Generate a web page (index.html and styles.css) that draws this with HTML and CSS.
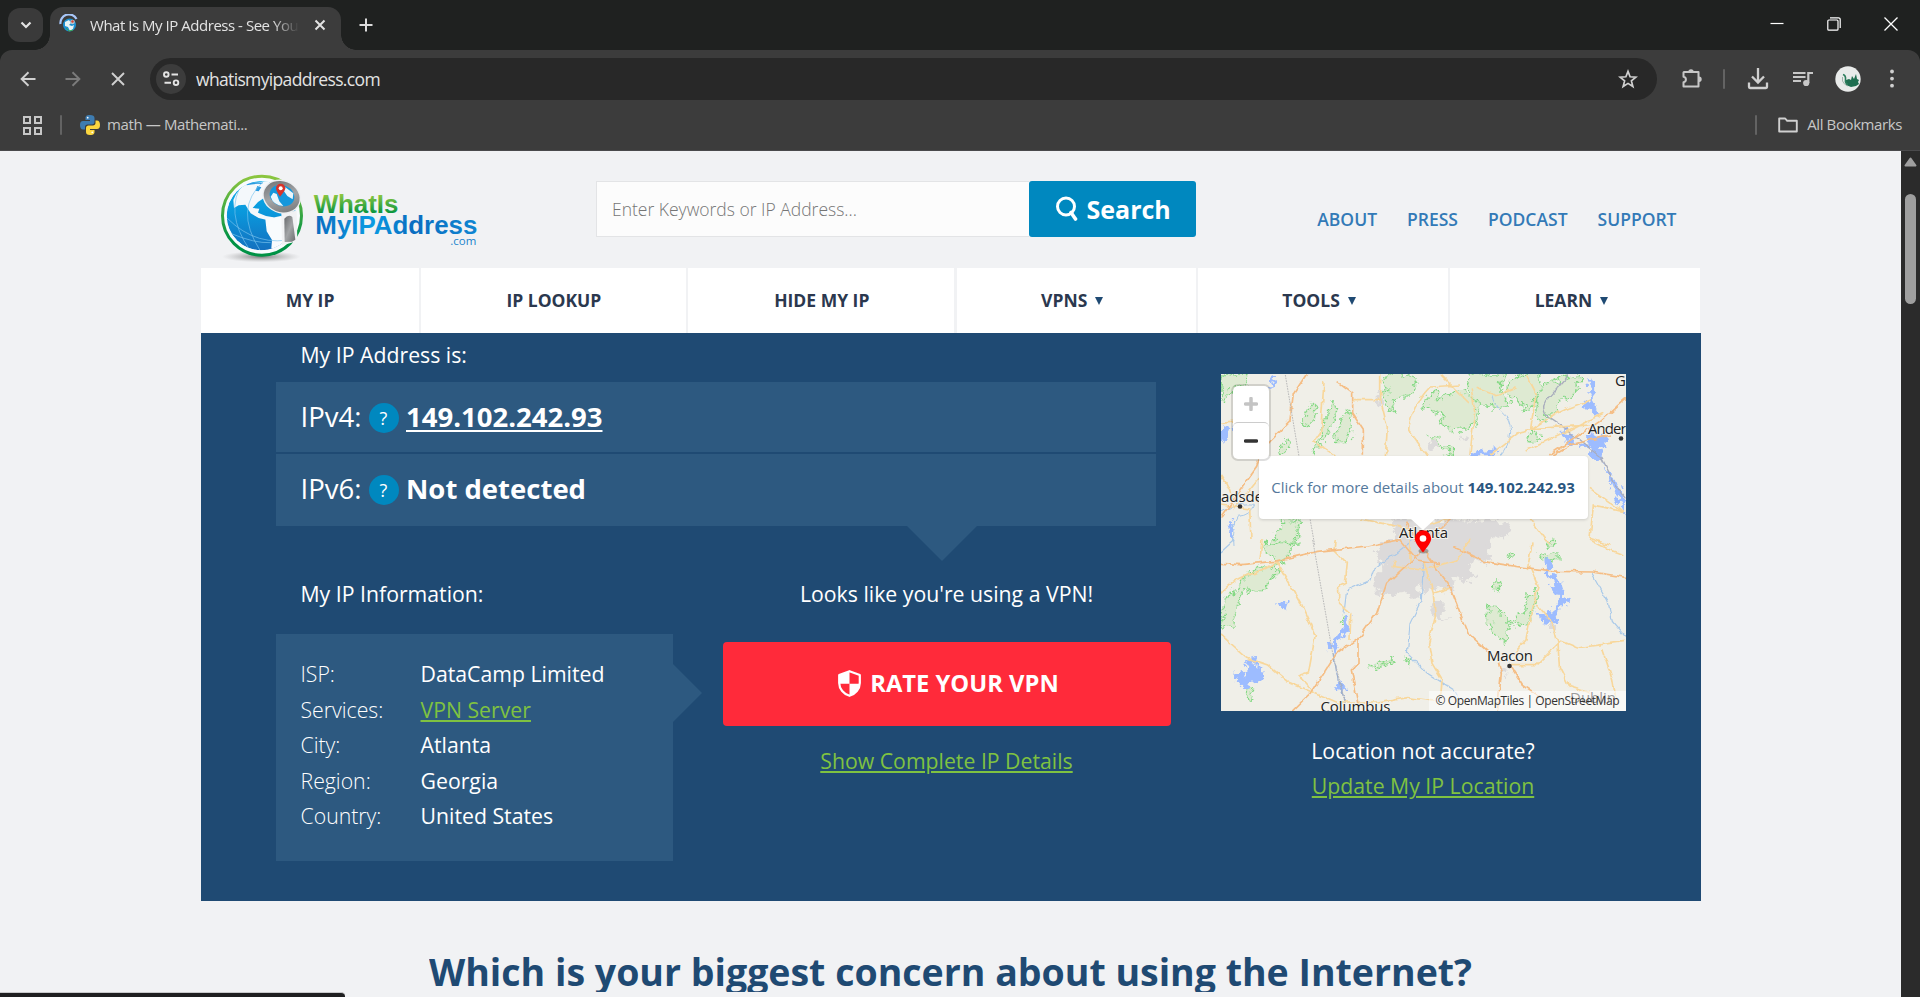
FILE: index.html
```html
<!DOCTYPE html>
<html lang="en">
<head>
<meta charset="utf-8">
<title>What Is My IP Address</title>
<link rel="stylesheet" href="styles.css">
</head>
<body>
<div class="browser">
  <div class="tabstrip">
    <div class="tab-menu"><svg width="14" height="10" viewBox="0 0 14 10"><path d="M2.5 2.5 7 7l4.500-4.500" fill="none" stroke="#e3e3e3" stroke-width="2.200"/></svg></div>
    <div class="tab">
      <svg class="favicon" width="20" height="20" viewBox="0 0 20 20">
        <circle cx="10.500" cy="11" r="6.500" fill="#1c8fd0"/><path d="M6 8l4-2 2 3-2 2 3 1 2-1-1 4-3 2-2-4-3-1z" fill="#e8f3f4"/><circle cx="13.500" cy="8" r="2.300" fill="#b8c6cf"/><circle cx="13.500" cy="7.500" r="1.200" fill="#d8402f"/><path d="M7 14l3 3 4-1" stroke="#3aa655" fill="none"/>
        <path d="M1.500 10A8.500 8.500 0 0 1 17.500 5" fill="none" stroke="#a8c7fa" stroke-width="2.200"/>
      </svg>
      <span class="tab-title">What Is My IP Address - See You</span>
      <svg class="tab-close" width="12" height="12" viewBox="0 0 12 12"><path d="M1.500 1.500l9 9m0-9l-9 9" stroke="#e3e3e3" stroke-width="2"/></svg>
    </div>
    <svg class="tab-new" width="14" height="14" viewBox="0 0 14 14"><path d="M7 .5v13M.5 7h13" stroke="#dcdcdc" stroke-width="2"/></svg>
    <div class="window-buttons">
      <svg width="14" height="14" viewBox="0 0 14 14"><path d="M.5 6.500h13" stroke="#fff" stroke-width="1.200"/></svg>
      <svg width="14" height="14" viewBox="0 0 14 14" fill="none" stroke="#fff" stroke-width="1.200"><rect x=".8" y="3" width="10.200" height="10.200" rx="1"/><path d="M3 .8h8.500a1.700 1.700 0 0 1 1.700 1.700V11"/></svg>
      <svg width="14" height="14" viewBox="0 0 14 14"><path d="M.5.5l13 13m0-13l-13 13" stroke="#fff" stroke-width="1.300"/></svg>
    </div>
  </div>
  <div class="toolbar">
    <svg class="back" width="16" height="16" viewBox="0 0 16 16" fill="none" stroke="#d0d0d0" stroke-width="1.900"><path d="M15.500 8H2M8.500 1.200L1.600 8l6.900 6.800"/></svg>
    <svg class="forward" width="16" height="16" viewBox="0 0 16 16" fill="none" stroke="#7b7b7b" stroke-width="1.900"><path d="M.5 8H14M7.500 1.200L14.400 8l-6.900 6.800"/></svg>
    <svg class="stop" width="14" height="14" viewBox="0 0 14 14"><path d="M1 1l12 12M13 1L1 13" stroke="#d0d0d0" stroke-width="1.900"/></svg>
    <div class="omnibox">
      <div class="site-info"><svg width="17" height="16" viewBox="0 0 17 16" fill="none" stroke="#e3e3e3" stroke-width="1.900"><circle cx="3.300" cy="3.500" r="2.300"/><path d="M8.500 3.500H15M1.500 11.700H8"/><circle cx="13" cy="11.700" r="2.300"/></svg></div>
      <span class="url">whatismyipaddress.com</span>
      <svg class="star" width="20" height="20" viewBox="0 0 20 20"><path d="M10 2.400l2.100 5.400 5.800.4-4.500 3.700 1.500 5.600-4.900-3.100-4.900 3.100 1.500-5.600L2.100 8.200l5.800-.4z" fill="none" stroke="#d0d0d0" stroke-width="1.700"/></svg>
    </div>
    <div class="tools">
      <svg class="ext" width="22" height="22" viewBox="0 0 22 22"><path d="M3 4h14.500v14.500H2.500v-4.300c3.200-.5 3.200-5 0-5.500V4.500z" fill="none" stroke="#c7c7c7" stroke-width="2" stroke-linejoin="round"/><path d="M7.300 4a2.700 2.700 0 0 1 5.400 0zM18 8.500a2.700 2.700 0 0 1 0 5.400z" fill="#c7c7c7"/></svg>
      <i class="sep"></i>
      <svg class="dl" width="22" height="22" viewBox="0 0 22 22" fill="none" stroke="#d0d0d0" stroke-width="2.300"><path d="M11 0v14M5 8.500l6 6 6-6M2 14.500v4.500a1 1 0 0 0 1 1h16a1 1 0 0 0 1-1v-4.500"/></svg>
      <svg class="media" width="20" height="16" viewBox="0 0 20 16"><path d="M0 2h12.500M0 6h12.500M0 10h8" stroke="#c7c7c7" stroke-width="1.900"/><path d="M15.300 12V2H20" stroke="#c7c7c7" stroke-width="2.200" fill="none"/><circle cx="13.200" cy="12" r="3.100" fill="#c7c7c7"/></svg>
      <svg class="avatar" width="26" height="26" viewBox="0 0 26 26"><circle cx="13" cy="13" r="12.700" fill="#e9ebea"/><path d="M11 14l3-1 2 1 1-4 2 3 2-5 1 5 2 1-1 2 1 2-3 2-5 1-5-2z" fill="#1f6e50"/><path d="M8 8.500q3 1 2.500 5t2.500 5" stroke="#2c7d5c" stroke-width="1.600" fill="none"/><path d="M7.500 11v4q1 3 5 5" stroke="#9fb5ab" fill="none"/></svg>
      <svg class="more" width="4" height="20" viewBox="0 0 4 20" fill="#d0d0d0"><circle cx="2" cy="2.500" r="1.900"/><circle cx="2" cy="9.600" r="1.900"/><circle cx="2" cy="16.700" r="1.900"/></svg>
    </div>
  </div>
  <div class="bookmarks">
    <svg class="apps" width="19" height="19" viewBox="0 0 19 19" fill="none" stroke="#c7c7c7" stroke-width="2"><path d="M1 1h6v6H1zM12 1h6v6h-6zM1 12h6v6H1zM12 12h6v6h-6z"/></svg>
    <i class="sep"></i>
    <svg class="python" width="20" height="20" viewBox="0 0 20 20"><path d="M10 0C6 0 5.500 1.500 5.500 3v2H10v1H3C1 6 0 7.500 0 10s1 4.500 3 4.500h2V12c0-1.500 1-2.500 2.500-2.500h4.500c1.500 0 2.500-1 2.500-2.500V3c0-2-1.500-3-4.500-3z" fill="#3e7cb1"/><path d="M10 20c4 0 4.500-1.500 4.500-3v-2H10v-1h7c2 0 3-1.500 3-4s-1-4.500-3-4.500h-1.500V8c0 1.500-1 2.500-2.500 2.500H8.500C7 10.500 6 11.500 6 13v4c0 2 1 3 4 3z" fill="#fbd63f"/><circle cx="7.700" cy="2.700" r=".9" fill="#fff"/><circle cx="12.300" cy="17.300" r=".9" fill="#fff"/></svg>
    <span class="bm-label">math — Mathemati...</span>
    <i class="sep sep-right"></i>
    <svg class="folder" width="20" height="16" viewBox="0 0 20 16"><path d="M1.200 1.500h6l2 2.300h9.600V14.500H1.200z" fill="none" stroke="#d0d0d0" stroke-width="1.900" stroke-linejoin="round"/></svg>
    <span class="bm-all">All Bookmarks</span>
  </div>
  <div class="viewport">
    <div class="page">
      <div class="container">
        <header class="site-header">
          <svg class="logo" width="266" height="95" viewBox="60 60 798 285">
            <defs>
              <linearGradient id="ring" x1="0" y1="0" x2="0" y2="1"><stop offset="0" stop-color="#8cc63f"/><stop offset=".8" stop-color="#009245"/></linearGradient>
              <linearGradient id="sea" x1="0" y1="0" x2="0" y2="1"><stop offset="0" stop-color="#0db0ea"/><stop offset=".45" stop-color="#0a98dc"/><stop offset="1" stop-color="#1470bf"/></linearGradient>
              <linearGradient id="word1" x1="0" y1="0" x2="0" y2="1"><stop offset=".2" stop-color="#8cc63f"/><stop offset=".85" stop-color="#00923f"/></linearGradient>
              <linearGradient id="word2" x1="0" y1="0" x2="1" y2="0"><stop offset="0" stop-color="#0a6dc0"/><stop offset=".35" stop-color="#0a9be2"/><stop offset=".6" stop-color="#0a6dc0"/><stop offset="1" stop-color="#0f86d2"/></linearGradient>
              <linearGradient id="metal" x1="0" y1="0" x2="1" y2="1"><stop offset="0" stop-color="#67696c"/><stop offset=".5" stop-color="#a3a5a7"/><stop offset="1" stop-color="#6c6e70"/></linearGradient>
              <radialGradient id="shade"><stop offset="0" stop-color="#555" stop-opacity=".75"/><stop offset="1" stop-color="#999" stop-opacity="0"/></radialGradient>
              <clipPath id="globe"><circle cx="184" cy="197" r="104"/></clipPath>
            </defs>
            <ellipse cx="184" cy="320" rx="118" ry="17" fill="url(#shade)"/>
            <circle cx="186" cy="197" r="118.500" fill="#f8fbfd" stroke="url(#ring)" stroke-width="9"/>
            <g clip-path="url(#globe)">
              <circle cx="184" cy="197" r="104" fill="url(#sea)"/>
              <path d="M100 150q14-38 46-50l62-8 4 60-20-8-18 12-16 18 20 2-4 12 24 10 22 4 8 12-18-2-34-8-24-14-16-26-20 2-14 8z" fill="#f4f8fb"/>
              <path d="M196 208l46-10 50 12-10 50-44 42-24-8 2-24-16-26z" fill="#f8fbfd"/>
              <path d="M172 108l12 4-8 12-10-2zM140 102q24-8 50-4l-6 4q-20-2-44 4z" fill="#2a9be0"/>
              <path d="M82 205q90 90 206 60M92 250q70 30 120 28M130 95q-60 90 20 206M190 95q-90 80-10 206" fill="none" stroke="#7cc4ee" stroke-width="2"/>
            </g>
            <path d="M244 188l46-6 2 92-46 12z" fill="#f1f2f4"/>
            <path d="M253 206q12-14 24-5l9 68-10 6-22 1z" fill="url(#metal)"/>
            <ellipse cx="245" cy="140" rx="59" ry="50" transform="rotate(22 245 140)" fill="#eceef0"/>
            <ellipse cx="245" cy="140" rx="55" ry="46" transform="rotate(22 245 140)" fill="url(#metal)"/>
            <ellipse cx="246" cy="137" rx="38" ry="31" transform="rotate(22 246 137)" fill="#1597dc"/>
            <path d="M212 140q8 26 38 28l-12-14-8-22-10-4zM256 112l24 18-2 18-16-10-10-14z" fill="#eaf5fb"/>
            <path d="M240 140q-12-18-12-25a14 14 0 0 1 28 0q-1 8-16 25z" fill="#d9332a"/><circle cx="242" cy="115" r="6" fill="#fff"/>
            <text class="logo-a" x="341" y="188" textLength="254" lengthAdjust="spacingAndGlyphs" fill="url(#word1)">WhatIs</text>
            <text class="logo-b" x="346" y="253" textLength="486" lengthAdjust="spacingAndGlyphs" fill="url(#word2)">MyIPAddress</text>
            <text class="logo-c" x="751" y="285" textLength="78" lengthAdjust="spacingAndGlyphs" fill="#1c84cc">.com</text>
          </svg>
          <div class="search">
            <div class="search-input">Enter Keywords or IP Address...</div>
            <div class="search-button">
              <svg width="22" height="26" viewBox="0 0 22 26" fill="none" stroke="#fff"><circle cx="10" cy="10.500" r="8.500" stroke-width="3"/><path d="M15 16.500l4.500 6.500" stroke-width="3.600" stroke-linecap="round"/></svg>
              <span>Search</span>
            </div>
          </div>
          <div class="top-links"><span>ABOUT</span><span>PRESS</span><span>PODCAST</span><span>SUPPORT</span></div>
        </header>
        <nav class="main-nav">
          <div>MY IP</div><div>IP LOOKUP</div><div>HIDE MY IP</div>
          <div>VPNS<i class="caret"></i></div><div>TOOLS<i class="caret"></i></div><div>LEARN<i class="caret"></i></div>
        </nav>
        <section class="hero">
          <div class="addresses">
            <p class="lead">My IP Address is:</p>
            <div class="ip-rows">
              <div class="ip-row"><span class="ip-label">IPv4:</span><span class="help">?</span><b class="ip-link">149.102.242.93</b></div>
              <div class="ip-row ip-row-last"><span class="ip-label">IPv6:</span><span class="help">?</span><b>Not detected</b></div>
              <svg class="arrow-down" width="70" height="35" viewBox="0 0 70 35"><path d="M0 0h70L35 35z" fill="#2d5980"/></svg>
            </div>
            <div class="details">
              <div>
                <p class="lead">My IP Information:</p>
                <div class="info">
                  <span>ISP:</span><b>DataCamp Limited</b>
                  <span>Services:</span><b class="green">VPN Server</b>
                  <span>City:</span><b>Atlanta</b>
                  <span>Region:</span><b>Georgia</b>
                  <span>Country:</span><b>United States</b>
                  <svg class="arrow-right" width="29" height="58" viewBox="0 0 29 58"><path d="M0 0l29 29L0 58z" fill="#2d5980"/></svg>
                </div>
              </div>
              <div class="vpn">
                <p class="lead vpn-lead">Looks like you're using a VPN!</p>
                <div class="rate"><svg width="23" height="27" viewBox="0 0 23 27"><path d="M11.500 1.200L21.800 5v8c0 6-4.500 11-10.300 12.800C5.700 24 1.200 19 1.200 13V5z" fill="#ff2a3a" stroke="#fff" stroke-width="2.200" stroke-linejoin="round"/><path d="M11.500 1.200V13.700H1.200V5zM11.500 13.700h10.300c-.6 5.500-4.700 10.300-10.300 12.100z" fill="#fff"/></svg><span>RATE YOUR VPN</span></div>
                <p class="lead green">Show Complete IP Details</p>
              </div>
            </div>
          </div>
          <div class="map-col">
            <div class="map">
              <svg class="map-art" width="405" height="337" viewBox="0 0 405 337">
                <defs>
                  <filter id="rough" x="-5%" y="-5%" width="110%" height="110%" color-interpolation-filters="sRGB"><feTurbulence type="fractalNoise" baseFrequency=".045" numOctaves="4" seed="4"/><feDisplacementMap in="SourceGraphic" scale="42" xChannelSelector="R" yChannelSelector="G"/></filter>
                  <filter id="wobble" x="-5%" y="-5%" width="110%" height="110%" color-interpolation-filters="sRGB"><feTurbulence type="fractalNoise" baseFrequency=".04" numOctaves="2" seed="9"/><feDisplacementMap in="SourceGraphic" scale="16" xChannelSelector="R" yChannelSelector="G"/></filter>
                </defs>
                <rect width="405" height="337" fill="#f0efe8"/>
                <!-- northern half -->
                <g transform="scale(.33333) translate(-33 -27)">
                  <g filter="url(#rough)" fill="#deead2" stroke="#84d984" stroke-width="5" stroke-dasharray="5 2">
                    <path d="M33 30h75l-6 32-30 4-30 50-9-10zM528 27h90l-4 46-22 22-38 4-6 42-22-20zM640 104l30-22 26 22 16-20 40-4 52 26-4 70-50 24-60-24 10-26-60-24zM772 27h110l-10 40 20 50-30 10-30-10-20 8-18-20-24-40zM890 60l30-30 60-4 10 40-20 60-24 14-20-30-30-10zM1000 60l80-30 40 10-30 50-38 16-26 50-42 4-8-40zM275 175l30-60 16 30-22 36zM312 268l52-150 18 10-14 56zM374 232l20-74 34-24-14 98zM212 240l18-18 8 26-24 18zM658 214l24 4 20 26 28 6-4 20-34-20zM946 222l22-28 26 30-30 12zM1012 540l20-28 4 28zM180 540l46-78 44 4-6 74z"/>
                  </g>
                  <g filter="url(#rough)" fill="#dcdada"><path d="M550 458h30l60 10 110-5 110 6 44 10-10 30-50 12-8 32H536l24-42zM655 225l30 4v22h-22zM758 212h12v14h-14zM505 84h10v34h-14z"/></g>
                  <g filter="url(#rough)" fill="#9dbcff"><path d="M1134 40l14 4 8 36-12 32 26 40-28-14-26-10 24-36-8-36zM33 192l32-10-6 34-26 20zM1130 214l52-10 8 40-18 10 8 28-36 4-10-34-60-20-20-36 22 6 26 34 34 4zM780 254l40 6 44-6-20 20h-62zM1186 296l20 40 30 40 10 78-30-60-20-50zM58 464l14 8-6 60-12-26zM186 27l10 2-6 36-14 4 8-22z"/></g>
                  <g filter="url(#wobble)" fill="none" stroke="#a9c9e9" stroke-width="3">
                    <path d="M846 90q4 30 30 50t26 60-30 72M33 440q60-30 100-22-10 34-50 36-20 30-14 86"/>
                  </g>
                  <path d="M1076 30l-60 70q-24 20-10 50l60 40 60 50 50 40 40 80 30 40" fill="none" stroke="#a9adbd" stroke-width="4" filter="url(#wobble)"/>
                  <g filter="url(#wobble)" fill="none" stroke="#f8d79b" stroke-width="5">
                    <path d="M342 50l-10 150-20 30 64 40M428 104h84M512 30v76l20 80-6 90M750 60l-90 6q-58 60-64 130l60 80M690 27l90 90M800 70l60 22 60-24M784 70l10 70-14 130M950 30l28 54-16 110 60-40 40-20 80-30M840 270l90-70 50-10 160-10M1180 145l-100 50-130 60M33 330q30 40 40 100l80-100M33 420l86 12 4 90M33 175l100-10M450 462l52 10 100 20 30 40M660 480l60-20M1140 370l100 70-90-20-10 100 60 20M960 460l60 80"/>
                  </g>
                  <g filter="url(#wobble)" fill="none" stroke="#f5bd84" stroke-width="5"><path d="M290 27l-40 60-10 80-80 80-20 60-107 150M380 50l48 36v60l32 50v76M1248 100l-80 70-150 100M1200 210l-120 30-50 30M720 462l-70 70M590 470l30 70"/></g>
                  <path d="M226 30l42 250 46 260" fill="none" stroke="#b9b9b9" stroke-width="3" stroke-dasharray="5 3"/>
                </g>
                <!-- southern half -->
                <g transform="scale(.33333) translate(-33 498)">
                  <g filter="url(#rough)" fill="#dcdada"><path d="M526 0h310l-4 44 24 8-30 16-30-14-16 34 24 24-40 14-30-30-6 46 6 20-60-22-34 20-10-36-14 60-32-26-50 6-40-10v-40l30-30-30-50zM664 186l34 0v36l20 14-54-4zM1020 250h12v20h-12zM872 388l24 4-16 14z"/></g>
                  <g filter="url(#rough)" fill="#deead2" stroke="#84d984" stroke-width="5" stroke-dasharray="5 2">
                    <path d="M110 100l90-30-4 40-50 46-30-8-34 36-10 70-36 4 10-86 38-26zM170 10h84l-30 54-30-10-26-16zM834 192l26 20 34 20v70l-14 12-30-40-18-40zM900 250l20 10 36-14 10-40 18-20v-44l-30 26-10 40zM858 120l14 4-4 30-12-6zM900 34l20 8-8 14-16-4zM985 50l30-16 30 10-16 20zM484 380l60-22-10 16-46 12zM588 350l18 10-10 14zM108 444l22 4-8 26-12-8zM395 230l12 2-4 24-10-4z"/>
                  </g>
                  <g filter="url(#rough)" fill="#9dbcff"><path d="M208 190l30-6-4 24-24-6zM76 394l26 12 20-56 20-2-10 30 28 6-6 40-26 4-14 26-20-16-14-16zM350 300l20 6 30-44 6-38 14 6-4 40-36 46-2 30-16-10-16-22zM368 438l24-20 14 24-8 16zM1006 50l20 10-4 40 34 36 4 24 20 26-40 20-6 22 20 26-30-8-34-4-14-28 38 16 12-30 30-26-24-30-24-44z"/></g>
                  <g filter="url(#wobble)" fill="none" stroke="#a9c9e9" stroke-width="3.500"><path d="M610 0l-120 90-10 30-70 30-8 70M640 70l-6 110-34 70-8 90 60 60 80 50 20 40M1144 96l50 90 14 60 40 46M33 36l40-36"/></g>
                  <path d="M370 340l16 90 24 60" fill="none" stroke="#9aaed0" stroke-width="4" filter="url(#wobble)"/>
                  <g filter="url(#wobble)" fill="none" stroke="#f8d79b" stroke-width="5">
                    <path d="M33 285l80 70 60 20 60 50 80 34 70 30h120l90-16 80 10M200 66l70 120 46 100-20 110-28 10 44 50M33 160q40-50 100-60l70-34M156 0l-6 60M376 0l-4 30 40 40-6 60-20 10 0 50 36 30-2 80M640 60l30 100 6 70-20 80 10 60 30 50-4 50M780 0l-40 60-100 30-90-10 10-20M670 160l50-16M960 80l24 60-20 80-16 80-36 40M978 190l50 60 16 60 4 70 30 60 130 40M902 374h80l70-70 50 20 140-20M1178 330l30 90 10 60M1140 0l60 30 40 14M600 0v70M966 10l-14 80"/>
                  </g>
                  <g filter="url(#wobble)" fill="none" stroke="#f5bd84" stroke-width="5"><path d="M33 70l60 4 100-10 130-30 150-16 100-20M640 30l-110 100-30 90-50 70-70 50-70 110-80 80M640 30l80 110 54 140 90 80 10 40-12 110M730 20l90 44 100 16 120 14 108 2 100 16M444 290v80l-20 20 20 100M900 376l40 60 60 40M570 0l50 60 70 10"/></g>
                  <path d="M308 0l60 340 38 150" fill="none" stroke="#b9b9b9" stroke-width="3" stroke-dasharray="5 3"/>
                </g>
                <g class="places">
                  <text x="394" y="12">G</text><text x="367" y="59.500" textLength="61">Anderson</text><circle cx="400" cy="64.500" r="2.300"/>
                  <text x="-11" y="127.500">Gadsden</text><circle cx="19" cy="132.500" r="2.300"/>
                  <text x="178" y="163.500" textLength="49">Atlanta</text>
                  <text x="266" y="286.500" textLength="46">Macon</text><circle cx="288.500" cy="292" r="2.300"/>
                  <text x="99.500" y="338" textLength="70">Columbus</text><text x="349" y="329">Dublin</text>
                </g>
              </svg>
              <div class="zoomer"><div><svg width="14" height="14" viewBox="0 0 14 14"><path d="M7 1.500v11M1.500 7h11" stroke="#c4c4c4" stroke-width="3.500" stroke-linecap="round"/></svg></div><div><svg width="14" height="14" viewBox="0 0 14 14"><path d="M1.500 7h11" stroke="#333" stroke-width="3.500" stroke-linecap="round"/></svg></div></div>
              <div class="popup">Click for more details about&nbsp;<b>149.102.242.93</b></div>
              <svg class="popup-tip" width="24" height="12" viewBox="0 0 24 12"><path d="M0 0h24L12 11z" fill="#fff"/></svg>
              <svg class="pin" width="18" height="24" viewBox="0 0 18 24"><ellipse cx="9.500" cy="21" rx="5" ry="2.500" fill="#777" opacity=".6"/><path d="M9 22.500C4 16 .8 12 .8 8.500a8.200 8.200 0 0 1 16.400 0C17.200 12 14 16 9 22.500z" fill="#f00"/><circle cx="9" cy="8.500" r="3.300" fill="#fff"/></svg>
              <div class="attribution">© OpenMapTiles | OpenStreetMap</div>
            </div>
            <div class="location"><span>Location not accurate?</span><span class="green">Update My IP Location</span></div>
          </div>
        </section>
      </div>
      <h1 class="headline">Which is your biggest concern about using the Internet?</h1>
    </div>
    <div class="scrollbar"><svg width="13" height="10" viewBox="0 0 13 10"><path d="M6.500 1.500L11.500 8.500h-10z" fill="#9f9f9f" stroke="#9f9f9f" stroke-width="2" stroke-linejoin="round"/></svg><div class="thumb"></div></div>
    <div class="status"></div>
  </div>
</div>
</body>
</html>
```
FILE: styles.css
```css
* { box-sizing: border-box; }
body { margin: 0; overflow: hidden; font-family: "Open Sans", sans-serif; }
svg { display: block; flex: none; }
p, h1 { margin: 0; }
.browser { width: 1920px; height: 997px; display: flex; flex-direction: column; background: #3c3c3c; overflow: hidden; }

.tabstrip { height: 50px; background: #1f2120; display: flex; align-items: flex-start; }
.tab-menu { width: 35px; height: 34px; margin: 8px 0 0 8px; border-radius: 12px; background: #3a3a3a; display: flex; align-items: center; justify-content: center; }
.tab { position: relative; width: 291px; height: 43px; margin: 7px 0 0 7px; padding: 0 15px 7px 9px; border-radius: 13px 13px 0 0; background: #3c3c3c; display: flex; align-items: center; }
.tab::before, .tab::after { content: ""; position: absolute; bottom: 0; width: 15px; height: 15px; }
.tab::before { left: -15px; background: radial-gradient(circle at 0 0, transparent 14.5px, #3c3c3c 15px); }
.tab::after { right: -15px; background: radial-gradient(circle at 100% 0, transparent 14.5px, #3c3c3c 15px); }
.favicon { margin-top: -3px; }
.tab-title { width: 209px; margin-left: 11px; font-size: 15px; letter-spacing: -.47px; line-height: 20px; white-space: nowrap; overflow: hidden; color: #e3e3e3; -webkit-mask-image: linear-gradient(90deg, #000 182px, transparent 209px); mask-image: linear-gradient(90deg, #000 182px, transparent 209px); }
.tab-close { margin-left: auto; }
.tab-new { margin: 18px 0 0 18px; }
.window-buttons { margin: 17px 22px 0 auto; display: flex; gap: 43px; }

.toolbar { height: 58px; background: #3c3c3c; display: flex; align-items: center; position: relative; padding: 0 24px 0 20px; }
.toolbar::before { content: ""; position: absolute; inset: 0 0 auto; height: 12px; background: #1f2120; clip-path: path("M0 0H12A12 12 0 0 0 0 12ZM1920 0H1908A12 12 0 0 1 1920 12Z"); }
.forward { margin-left: 29px; }
.stop { margin-left: 30px; }
.omnibox { width: 1507px; height: 42px; margin-left: 25px; border-radius: 21px; background: #282828; display: flex; align-items: center; padding: 0 19px 0 6px; }
.site-info { width: 30px; height: 30px; border-radius: 50%; background: #3c3c3c; display: flex; align-items: center; justify-content: center; }
.url { margin-left: 10px; font-size: 17.5px; letter-spacing: -.65px; color: #e3e3e3; }
.star { margin-left: auto; }
.tools { margin-left: 24px; flex: 1; display: flex; align-items: center; }
.sep { width: 2px; height: 20px; background: #636363; border-radius: 1px; }
.ext + .sep { margin-left: 20px; }
.dl { margin-left: 22px; }
.media { margin-left: 24px; }
.avatar { margin-left: 22px; }
.more { margin-left: 29px; }

.bookmarks { height: 43px; padding: 0 18px 8px 23px; display: flex; align-items: center; border-bottom: 1px solid #4a4a4c; font-size: 15px; color: #c7c7c7; }
.apps + .sep { margin-left: 18px; }
.python { margin-left: 18px; }
.bm-label { margin: -2px 0 0 7px; letter-spacing: -.38px; }
.sep-right { margin-left: auto; }
.folder { margin: 0 9px 0 21px; }
.bm-all { margin-top: -2px; letter-spacing: -.4px; }

.viewport { height: 846px; display: flex; position: relative; }
.page { width: 1901px; background: #f1f2f4; display: flex; flex-direction: column; align-items: center; overflow: hidden; }
.container { width: 1500px; }
.scrollbar { width: 19px; background: #2b2b2b; display: flex; flex-direction: column; align-items: center; padding-top: 6px; }
.thumb { width: 11px; height: 110px; margin-top: 27px; border-radius: 6px; background: #9f9f9f; }
.status { position: absolute; left: 0; bottom: 0; width: 345px; height: 5px; background: #1f1f20; border-top: 1px solid #c9c9cb; border-top-right-radius: 4px; }

.site-header { height: 117px; display: flex; align-items: flex-start; padding: 0 24px 0 19px; }
.logo { margin-top: 19px; }
.logo-a, .logo-b { font-family: "Liberation Sans", sans-serif; font-weight: 700; }
.logo-a { font-size: 80px; }
.logo-b { font-size: 77px; }
.logo-c { font-family: "Open Sans", sans-serif; font-size: 35px; }
.search { margin: 30px 0 0 110px; display: flex; height: 56px; }
.search-input { width: 433px; padding-left: 15.5px; border: 1px solid #e3e4e6; border-right: 0; background: #fcfcfc; color: #757575; font-size: 17.5px; font-weight: 300; line-height: 54px; }
.search-button { width: 167px; border-radius: 3px; background: #0088bf; color: #fff; font-size: 25px; font-weight: 700; line-height: 56px; display: flex; align-items: center; padding-left: 27px; }
.search-button span { margin-left: 9px; }
.top-links { margin: 56px 0 0 auto; display: flex; gap: 30px; font-size: 17.5px; font-weight: 600; line-height: 24px; color: #337ab7; }

.main-nav { height: 65px; display: grid; grid-template-columns: 218px 265px 266px 239px 250px 250px; justify-content: space-between; }
.main-nav div { background: #fff; color: #2b384e; font-size: 17.5px; font-weight: 700; display: flex; align-items: center; justify-content: center; padding: 0 0 1px 1px; }
.caret { margin: 1px 9px 0 8px; border: solid transparent; border-width: 8px 4px 0; border-top-color: #1f4a73; }

.hero { height: 568px; padding: 0 75px; background: #1f4a73; color: #fff; display: grid; grid-template-columns: 895px 405px; gap: 50px; font-size: 21.25px; }
.addresses { padding-top: 7px; }
.lead { line-height: 30px; padding-left: 25px; }
.ip-rows { width: 880px; margin-top: 12px; position: relative; font-size: 27.5px; }
.ip-row { height: 70px; padding: 1px 0 0 25px; margin-bottom: 2px; background: #2d5980; display: flex; align-items: center; }
.ip-row-last { height: 72px; margin-bottom: 0; padding-top: 0; padding-bottom: 1px; }
.ip-label { width: 68px; margin-top: -2px; }
.ip-row b { margin-left: 7.5px; line-height: 36px; margin-top: -2px; }
.help { width: 30px; height: 30px; border-radius: 50%; background: #0088bf; font-size: 18px; line-height: 31px; text-align: center; }
.ip-link { text-decoration: underline; text-decoration-thickness: 2px; text-underline-offset: 3px; text-decoration-skip-ink: none; }
.arrow-down { position: absolute; top: 144px; left: 631px; }
.details { margin-top: 53px; display: grid; grid-template-columns: 397px 448px; gap: 50px; }
.info { position: relative; height: 227px; margin-top: 25px; padding: 22.4px 0 0 25px; background: #2d5980; display: grid; grid-template-columns: 120px 1fr; grid-auto-rows: 35.4px; align-content: start; line-height: 35.4px; }
.info span { font-weight: 300; }
.info b { font-weight: 400; justify-self: start; }
.arrow-right { position: absolute; left: 397px; top: 30px; }
.green { color: #7fc241; text-decoration: underline; text-decoration-thickness: 2px; text-underline-offset: 2px; }
.vpn .lead { padding: 0; text-align: center; }
.rate { height: 84px; margin: 33px 0 20px; border-radius: 4px; background: #ff2a3a; display: flex; align-items: center; justify-content: center; gap: 9px; padding: 0 0 2px 4px; font-size: 23.75px; font-weight: 700; }
.rate span { margin-top: -1px; }
.map-col { padding-top: 41px; }
.map { position: relative; height: 337px; overflow: hidden; }
.places { font-size: 15px; fill: #222; paint-order: stroke; stroke: #f4f3ee; stroke-width: 2px; }
.places circle { stroke: none; fill: #333; }
.zoomer { position: absolute; left: 12px; top: 12px; width: 36px; height: 73px; border-radius: 5px; background: #fff; box-shadow: 0 0 0 2px rgba(0,0,0,.13); z-index: 1; }
.zoomer div { height: 36px; display: flex; align-items: center; justify-content: center; }
.zoomer div + div { border-top: 1px solid #ccc; border-radius: 5px; height: 37px; padding-bottom: 1px; }
.popup { position: absolute; left: 38px; top: 82px; width: 329px; height: 63px; border-radius: 4px; background: #fff; box-shadow: 0 1px 3px rgba(0,0,0,.15); color: #54789b; font-size: 15px; line-height: 63px; text-align: center; white-space: nowrap; }
.popup b { color: #2a5680; }
.popup-tip { position: absolute; left: 190px; top: 145px; }
.pin { position: absolute; left: 193px; top: 156px; }
.attribution { position: absolute; right: 0; bottom: 0; width: 197px; height: 20px; background: rgba(255,255,255,.55); color: #333; font-size: 12px; letter-spacing: -.4px; line-height: 20px; padding-left: 7px; white-space: nowrap; }
.location { margin-top: 22px; display: flex; flex-direction: column; align-items: center; line-height: 35.4px; }
.headline { margin-top: 45px; height: 46px; overflow: hidden; line-height: 51px; font-size: 37.5px; font-weight: 700; color: #1f4a73; white-space: nowrap; }
```
